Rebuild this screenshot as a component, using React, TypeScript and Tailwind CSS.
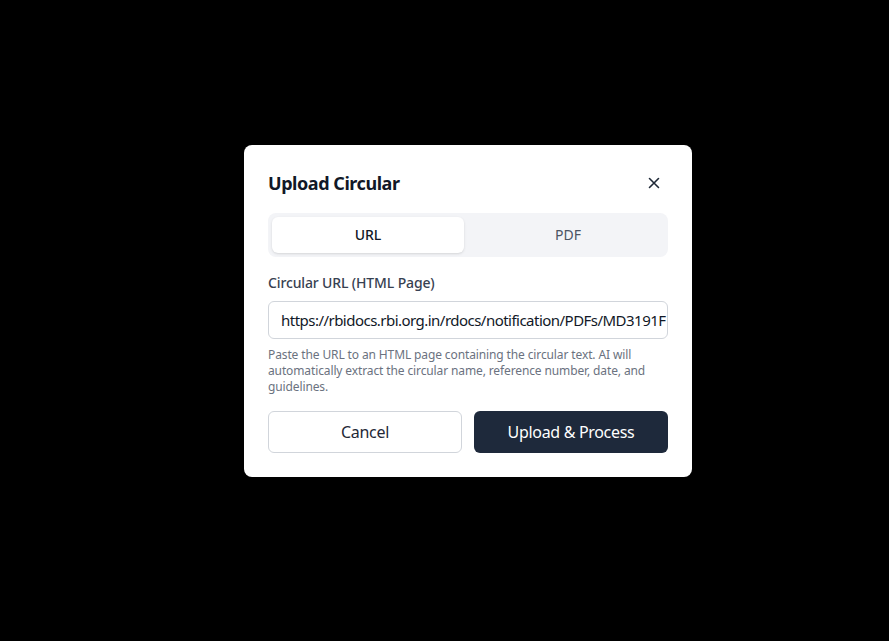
import React from "react";

export default function App() {
  return (
    <div
      className="w-[889px] h-[641px] bg-black pl-[244px] pt-[145px]"
      style={{ fontFamily: '"Noto Sans", "Open Sans", sans-serif' }}
    >
      <div className="w-[448px] bg-white rounded-lg p-6 flex flex-col">
        <div className="flex items-center justify-between h-7 mb-4">
          <h2 className="text-[18px] font-bold text-[#111827] leading-7 tracking-[-0.025em]">Upload Circular</h2>
          <button className="w-5 h-5 flex items-center justify-center text-[#1f2937] mr-1">
            <svg width="16" height="16" viewBox="0 0 16 16" fill="none" stroke="currentColor" strokeWidth="1.6" strokeLinecap="round">
              <path d="M3.5 3.5l9 9M12.5 3.5l-9 9" />
            </svg>
          </button>
        </div>
        <div className="grid grid-cols-2 gap-2 p-1 bg-[#f3f4f7] rounded-lg mb-4">
          <div className="h-9 flex items-center justify-center bg-white rounded-md shadow-sm text-sm font-medium text-[#111827]">
            URL
          </div>
          <div className="h-9 flex items-center justify-center rounded-md text-sm text-[#4b5563]">
            PDF
          </div>
        </div>
        <label className="text-sm font-medium text-[#374151] leading-5 mb-2 tracking-[-0.01em]">Circular URL (HTML Page)</label>
        <div className="h-[38px] border border-[#d1d5db] rounded-md px-3 flex items-center overflow-hidden">
          <span className="text-[15px] text-[#111827] whitespace-nowrap tracking-[-0.035em]">
            https://rbidocs.rbi.org.in/rdocs/notification/PDFs/MD3191F
          </span>
        </div>
        <p className="mt-2 text-xs leading-4 text-[#6b7280] tracking-[-0.01em]">
          Paste the URL to an HTML page containing the circular text. AI will automatically extract the circular name, reference number, date, and guidelines.
        </p>
        <div className="grid grid-cols-2 gap-3 mt-4">
          <button className="h-[42px] border border-[#d1d5db] rounded-md bg-white text-base text-[#1f2937] tracking-[-0.02em]">
            Cancel
          </button>
          <button className="h-[42px] rounded-md bg-[#1e293b] text-base text-white tracking-[-0.02em]">
            Upload &amp; Process
          </button>
        </div>
      </div>
    </div>
  );
}
